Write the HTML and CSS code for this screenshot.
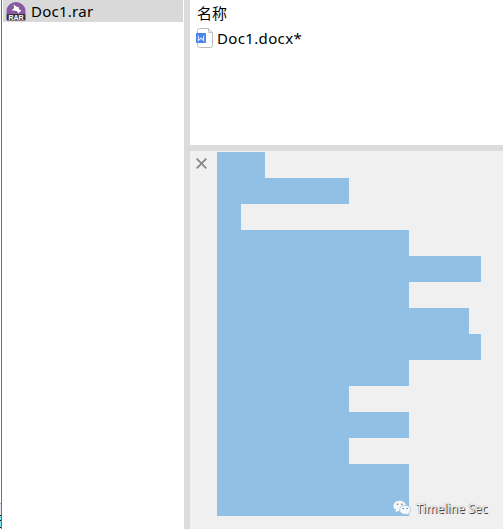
FILE: index.html
```html
<!DOCTYPE html>
<html lang="zh-CN">
<head>
<meta charset="utf-8">
<title>Doc1.rar</title>
<link rel="stylesheet" href="styles.css">
</head>
<body>
<div class="app">
  <div class="edge"><i class="edge-rule"></i><i class="edge-pale"></i><i class="edge-dark"></i><i class="edge-cyan"></i><i class="edge-dark"></i><i class="edge-cyan tall"></i><i class="edge-dark"></i></div>
  <aside class="tree">
    <div class="tree-item">
      <svg class="rar-icon" viewBox="0 0 20 20" width="20" height="20">
        <path d="M.5 13.500V10a9.500 9 0 0 1 19 0v3.500z" fill="#8858a0"/>
        <path d="M7.500 3.500l4 2.700.8-1 .8 3.300 2.400.8-3.200 3.200-1.300-2.400-5.500-.8 2.600-2z" fill="#fff"/>
        <rect x=".5" y="13" width="19" height="6.500" rx="1" fill="#37323c"/>
        <text x="10" y="18.500" text-anchor="middle" textLength="15" lengthAdjust="spacingAndGlyphs" class="rar-label">RAR</text>
      </svg>
      <span class="tree-name">Doc1.rar</span>
    </div>
  </aside>
  <main class="content">
    <section class="files">
      <div class="column-title">名称</div>
      <div class="file">
        <svg class="doc-icon" viewBox="0 0 18 20" width="18" height="20">
          <path d="M3.500.5h9l4 4v13a2 2 0 0 1-2 2h-11a2 2 0 0 1-2-2v-15a2 2 0 0 1 2-2z" fill="#fff" stroke="#bcbcbc"/>
          <path d="M12.500.8v3.700h3.800" fill="#eee" stroke="#c4c4c4"/>
          <rect x="0" y="5" width="10" height="10" rx="1" fill="#4a83ee"/>
          <path d="M2.400 7.800v4.600L5 10l2.600 2.400V7.800" fill="none" stroke="#dce8ff" stroke-width="1.100"/>
        </svg>
        <span class="file-name">Doc1.docx*</span>
      </div>
    </section>
    <section class="comment">
      <svg class="close" viewBox="0 0 11 11" width="11" height="11"><path d="M.7.7l9.600 9.600M10.300.7l-9.600 9.600" stroke="#858585" stroke-width="1.700"/></svg>
      <div class="selection">
        <div class="line w4"></div>
        <div class="line w11"></div>
        <div class="line w2"></div>
        <div class="line w16"></div>
        <div class="line w22"></div>
        <div class="line w16"></div>
        <div class="line w21"></div>
        <div class="line w22"></div>
        <div class="line w16"></div>
        <div class="line w11"></div>
        <div class="line w16"></div>
        <div class="line w11"></div>
        <div class="line w16"></div>
        <div class="line w16"></div>
      </div>
      <div class="watermark">
        <svg viewBox="0 0 18 16" width="18" height="16">
          <path d="M6.700.7c3.500 0 6.200 2.200 6.200 5.200s-2.700 5.200-6.200 5.200l-1.600-.2-2.600 1.500.5-2.500C1.400 9 .5 7.600.5 5.900.5 2.900 3.200.7 6.700.7z" fill="#f6f9fc"/>
          <path d="M12 5.200c3.200 0 5.500 2 5.500 4.600 0 1.400-.7 2.600-1.800 3.500l.4 2-2.200-1.100-1.900.2c-3.200 0-5.400-2-5.400-4.600s2.300-4.600 5.400-4.600z" fill="#f6f9fc" stroke="#91b4d2" stroke-width=".6"/>
          <g fill="#50789c"><circle cx="4.600" cy="4.300" r=".8"/><circle cx="8.900" cy="4.300" r=".8"/><circle cx="10.300" cy="8.500" r=".65"/><circle cx="14" cy="8.500" r=".65"/></g>
        </svg>
        <span class="watermark-text">Timeline Sec</span>
      </div>
    </section>
  </main>
</div>
</body>
</html>
```
FILE: styles.css
```css
* { box-sizing: border-box; }
body {
  margin: 0;
  overflow: hidden;
  background: #fff;
  color: #000;
  font-family: "Noto Sans", "Noto Sans CJK SC", sans-serif;
  font-size: 15px;
}
.app { display: flex; width: 503px; height: 529px; }
.edge {
  display: flex;
  flex-direction: column;
  width: 2px;
  padding-top: 503px;
  border-right: 1px solid #2f7fc4;
}
.edge-rule { height: 1px; background: #aaa; }
.edge-pale { height: 11px; background: #e8e6f4; }
.edge-dark { height: 1px; background: #111; }
.edge-cyan { height: 4px; background: #7de4f2; }
.edge-cyan.tall { height: 6px; }
.tree { width: 182px; padding-left: 1px; }
.tree-item {
  display: flex;
  align-items: center;
  width: 180px;
  height: 22px;
  padding-left: 3px;
  background: #d9d9d9;
}
.rar-icon { flex: none; margin-top: -1px; }
.rar-label { fill: #fff; font: bold 6.5px "Liberation Sans", sans-serif; }
.tree-name { margin-left: 5px; line-height: 22px; letter-spacing: .25px; }
.content {
  display: flex;
  flex-direction: column;
  width: 319px;
  border-left: 6px solid #dcdcdc;
}
.files {
  height: 151px;
  padding: 1px 0 0 6px;
  border-bottom: 6px solid #dcdcdc;
}
.column-title {
  padding-left: 1px;
  line-height: 24px;
  height: 24px;
  font-family: "Noto Sans CJK SC", sans-serif;
}
.file { display: flex; align-items: center; height: 26px; }
.file-name { margin-left: 3px; line-height: 26px; letter-spacing: .35px; }
.comment {
  position: relative;
  display: flex;
  align-items: flex-start;
  flex: 1;
  padding: 1px 0 0 6px;
  background: #f0f0f0;
}
.close { margin-top: 6px; }
.selection { margin-left: 10px; }
.line { height: 26px; background: #91c0e4; }
.w2 { width: 24px; }
.w4 { width: 48px; }
.w11 { width: 132px; }
.w16 { width: 192px; }
.w21 { width: 252px; }
.w22 { width: 264px; }
.watermark {
  position: absolute;
  left: 203px;
  top: 349px;
  display: flex;
  height: 18px;
}
.watermark-text {
  margin-left: 5px;
  color: #f4f4f4;
  font-size: 12px;
  line-height: 18px;
  letter-spacing: .1px;
  white-space: nowrap;
  text-shadow: 1px 1px 0 #444, 0 0 1px #777;
}
```
